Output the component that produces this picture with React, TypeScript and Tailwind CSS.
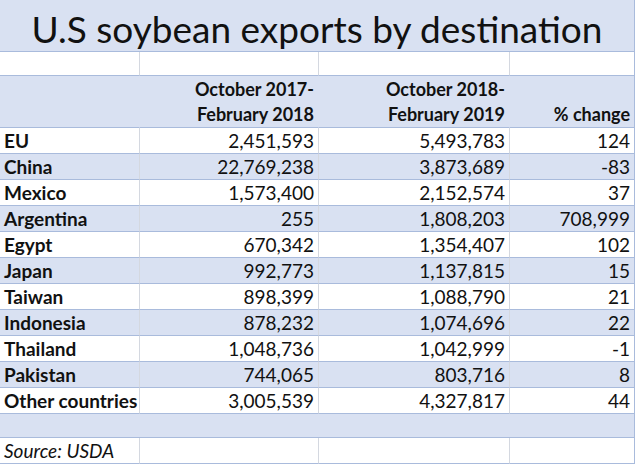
import type { ReactNode } from "react";

type Row = { name: string; a: string; b: string; c: string };

const ROWS: Row[] = [
  { name: "EU", a: "2,451,593", b: "5,493,783", c: "124" },
  { name: "China", a: "22,769,238", b: "3,873,689", c: "-83" },
  { name: "Mexico", a: "1,573,400", b: "2,152,574", c: "37" },
  { name: "Argentina", a: "255", b: "1,808,203", c: "708,999" },
  { name: "Egypt", a: "670,342", b: "1,354,407", c: "102" },
  { name: "Japan", a: "992,773", b: "1,137,815", c: "15" },
  { name: "Taiwan", a: "898,399", b: "1,088,790", c: "21" },
  { name: "Indonesia", a: "878,232", b: "1,074,696", c: "22" },
  { name: "Thailand", a: "1,048,736", b: "1,042,999", c: "-1" },
  { name: "Pakistan", a: "744,065", b: "803,716", c: "8" },
  { name: "Other countries", a: "3,005,539", b: "4,327,817", c: "44" },
];

const COLS = "grid grid-cols-[140px_179px_191px_125px]";

function Cell({
  children,
  right,
  last,
  className = "",
}: {
  children?: ReactNode;
  right?: boolean;
  last?: boolean;
  className?: string;
}) {
  return (
    <div
      className={`flex items-end overflow-visible whitespace-nowrap border-b border-[#a9bbdc] px-[4px] ${
        last ? "border-r border-r-[#a9bbdc]" : "border-r border-r-[#d4d8e0]"
      } ${right ? "justify-end text-right" : ""} ${className}`}
    >
      {children}
    </div>
  );
}

export default function App() {
  return (
    <div
      className="h-[465px] w-[637px] bg-white text-[#111]"
      style={{ fontFamily: "Lato, 'Open Sans', sans-serif" }}
    >
      <div className="w-[635px]">
        <div className="flex h-[52px] items-center justify-center border-b border-r border-[#a9bbdc] bg-[#d9e1f2] pt-[5px] text-[37px] leading-none">
          U.S soybean exports by destination
        </div>

        <div className={`${COLS} h-[24px] bg-white`}>
          <Cell />
          <Cell />
          <Cell />
          <Cell last />
        </div>

        <div className={`${COLS} h-[52px] bg-[#d9e1f2] text-[18px] font-bold leading-[25px]`}>
          <Cell className="border-r-transparent" />
          <Cell right className="border-r-transparent">
            <span>
              October 2017-
              <br />
              February 2018
            </span>
          </Cell>
          <Cell right className="border-r-transparent">
            <span>
              October 2018-
              <br />
              February 2019
            </span>
          </Cell>
          <Cell right last>
            % change
          </Cell>
        </div>

        {ROWS.map((row, i) => (
          <div
            key={row.name}
            className={`${COLS} h-[26px] text-[19px] leading-[20px] ${
              i % 2 === 0 ? "bg-white" : "bg-[#d9e1f2]"
            }`}
          >
            <Cell className="pb-[2px] font-bold">{row.name}</Cell>
            <Cell right className="pb-[2px]">
              {row.a}
            </Cell>
            <Cell right className="pb-[2px]">
              {row.b}
            </Cell>
            <Cell right last className="pb-[2px]">
              {row.c}
            </Cell>
          </div>
        ))}

        <div className="h-[24px] border-b border-r border-[#a9bbdc] bg-[#d9e1f2]" />

        <div className={`${COLS} h-[26px] bg-white text-[19px] leading-[20px]`}>
          <Cell className="pb-[2px] italic">Source: USDA</Cell>
          <Cell />
          <Cell />
          <Cell last />
        </div>
      </div>
    </div>
  );
}
